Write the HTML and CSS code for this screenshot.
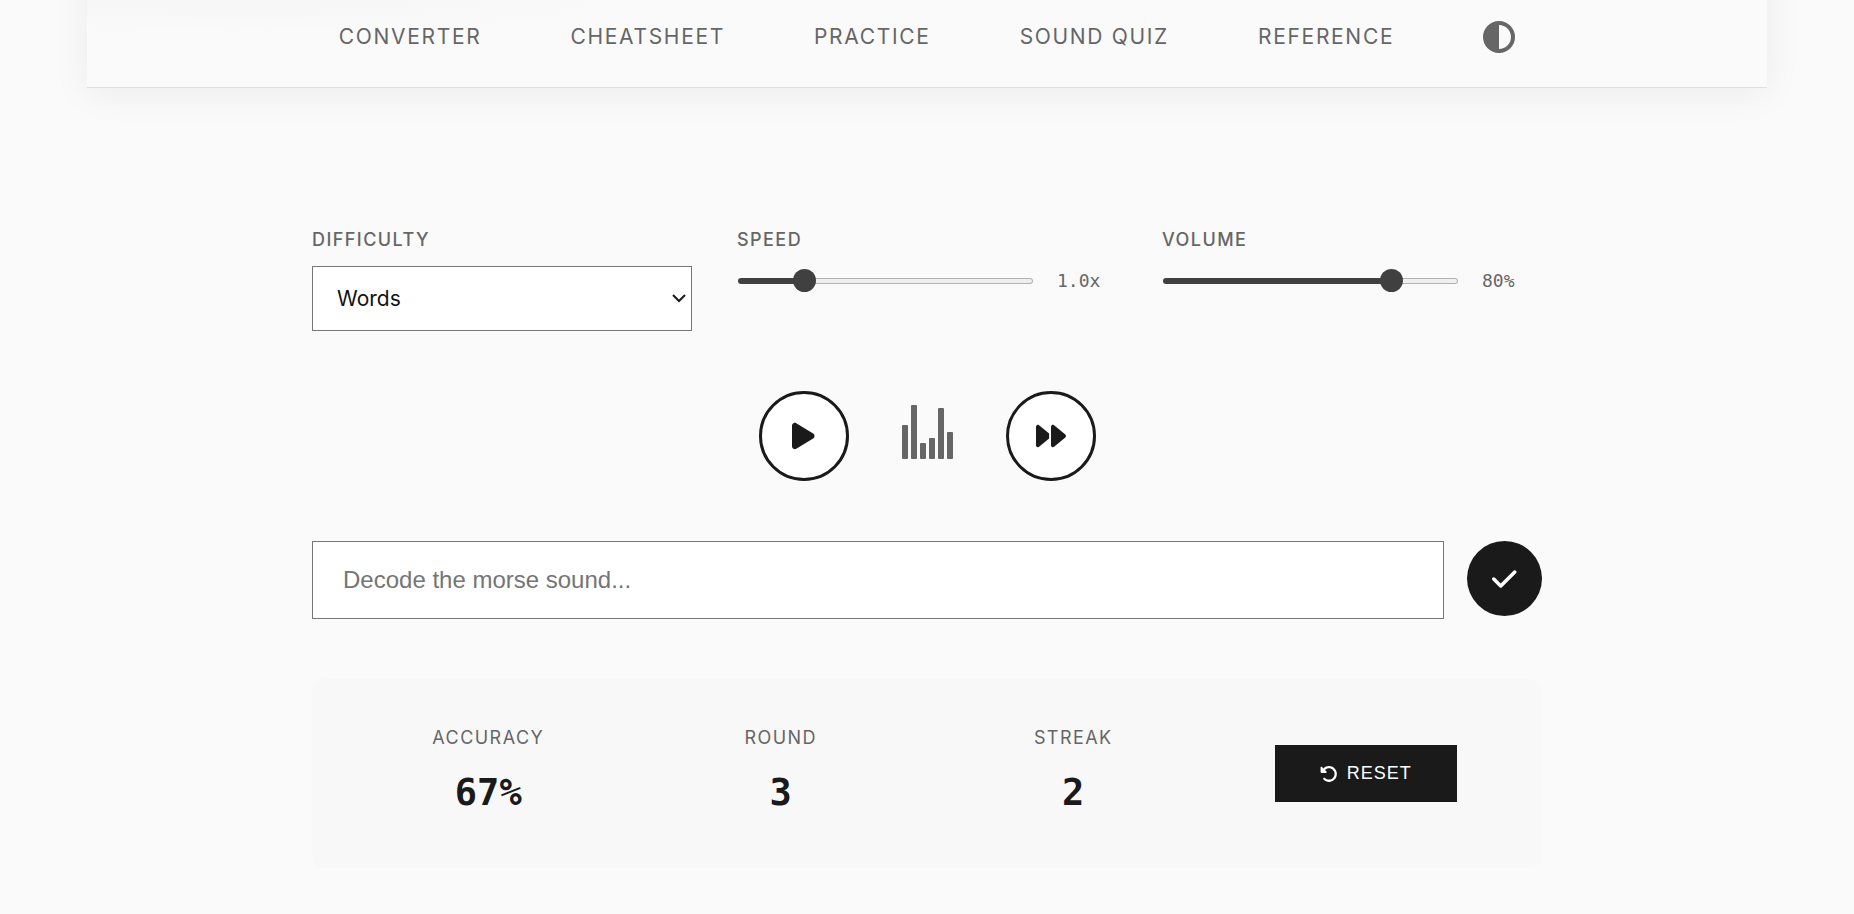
FILE: index.html
```html
<!DOCTYPE html>
<html lang="en">
<head>
<meta charset="utf-8">
<meta name="viewport" content="width=device-width, initial-scale=1">
<title>Sound Quiz</title>
<link rel="stylesheet" href="styles.css">
</head>
<body>
<header class="site-header">
  <nav class="nav">
    <a class="nav-link" href="#converter">Converter</a>
    <a class="nav-link" href="#cheatsheet">Cheatsheet</a>
    <a class="nav-link" href="#practice">Practice</a>
    <a class="nav-link" href="#quiz">Sound Quiz</a>
    <a class="nav-link" href="#reference">Reference</a>
    <button class="theme-toggle" type="button" aria-label="Toggle theme">
      <svg viewBox="0 0 512 512" width="32" height="32" fill="currentColor"><path d="M448 256c0-106-86-192-192-192V448c106 0 192-86 192-192zM0 256a256 256 0 1 1 512 0A256 256 0 1 1 0 256z"/></svg>
    </button>
  </nav>
</header>
<main class="quiz">
  <section class="settings">
    <div class="field">
      <label class="field-label" for="difficulty">Difficulty</label>
      <div class="select-wrap">
        <select class="select" id="difficulty"><option>Words</option></select>
        <svg class="chevron" viewBox="0 0 14 9" width="14" height="9" fill="none" stroke="currentColor" stroke-width="2"><path d="M1 1l6 6 6-6"/></svg>
      </div>
    </div>
    <div class="field">
      <label class="field-label" for="speed">Speed</label>
      <div class="slider-row">
        <input class="slider" id="speed" type="range" min="0.5" max="3" step="0.1" value="1" style="--fill: 20%">
        <output class="slider-value" for="speed">1.0x</output>
      </div>
    </div>
    <div class="field">
      <label class="field-label" for="volume">Volume</label>
      <div class="slider-row">
        <input class="slider" id="volume" type="range" min="0" max="100" value="80" style="--fill: 80%">
        <output class="slider-value" for="volume">80%</output>
      </div>
    </div>
  </section>
  <section class="player">
    <button class="round-btn" type="button" aria-label="Play">
      <svg viewBox="0 0 384 512" height="30" fill="currentColor"><path d="M73 39c-14.8-9.1-33.4-9.4-48.5-.9S0 62.6 0 80V432c0 17.4 9.4 33.4 24.5 41.9s33.7 8.1 48.5-.9L361 297c14.3-8.7 23-24.2 23-41s-8.7-32.2-23-41L73 39z"/></svg>
    </button>
    <div class="bars" aria-hidden="true">
      <span class="bar" style="height: 34px"></span>
      <span class="bar" style="height: 54px"></span>
      <span class="bar" style="height: 16px"></span>
      <span class="bar" style="height: 21px"></span>
      <span class="bar" style="height: 51px"></span>
      <span class="bar" style="height: 27px"></span>
    </div>
    <button class="round-btn" type="button" aria-label="Next">
      <svg viewBox="0 0 512 512" height="30" fill="currentColor"><path d="M52.500 440.600c-9.500 7.900-22.800 9.700-34.100 4.400S0 428.400 0 416V96C0 83.600 7.200 72.300 18.400 67s24.500-3.600 34.100 4.400L224 214.300V256v41.700L52.500 440.600zM256 352V256 128 96c0-12.400 7.200-23.700 18.400-29s24.500-3.600 34.100 4.400l192 160c7.300 6.100 11.500 15.100 11.500 24.600s-4.200 18.500-11.500 24.600l-192 160c-9.500 7.900-22.800 9.700-34.100 4.400s-18.400-16.600-18.400-29V352z"/></svg>
    </button>
  </section>
  <form class="answer">
    <input class="answer-input" type="text" placeholder="Decode the morse sound..." aria-label="Your answer">
    <button class="submit-btn" type="button" aria-label="Check answer">
      <svg viewBox="0 0 448 512" height="28" fill="currentColor"><path d="M438.600 105.400c12.500 12.500 12.500 32.800 0 45.300l-256 256c-12.500 12.500-32.800 12.500-45.300 0l-128-128c-12.500-12.500-12.500-32.800 0-45.300s32.800-12.500 45.300 0L160 338.700 393.400 105.400c12.500-12.500 32.800-12.500 45.300 0z"/></svg>
    </button>
  </form>
  <section class="stats">
    <div class="stat"><span class="stat-label">Accuracy</span><span class="stat-value">67%</span></div>
    <div class="stat"><span class="stat-label">Round</span><span class="stat-value">3</span></div>
    <div class="stat"><span class="stat-label">Streak</span><span class="stat-value">2</span></div>
    <button class="reset-btn" type="button">
      <svg viewBox="0 0 512 512" width="18" height="18" fill="currentColor"><path d="M48.500 224H40c-13.300 0-24-10.700-24-24V72c0-9.700 5.800-18.500 14.800-22.200s19.300-1.700 26.200 5.200L98.600 96.600c87.600-86.500 228.700-86.200 315.800 1c87.500 87.500 87.500 229.300 0 316.800s-229.300 87.500-316.800 0c-12.500-12.500-12.500-32.800 0-45.300s32.800-12.500 45.300 0c62.500 62.500 163.800 62.500 226.300 0s62.500-163.800 0-226.300c-62.200-62.200-162.700-62.500-225.300-1L185 183c6.900 6.900 8.900 17.200 5.200 26.200s-12.500 14.800-22.200 14.800H48.500z"/></svg>
      Reset
    </button>
  </section>
</main>
</body>
</html>
```
FILE: styles.css
```css
:root {
  --ink: #1a1a1a;
  --muted: #666;
  --accent: #404040;
  --page: #fafafa;
}

* { box-sizing: border-box; }

body {
  margin: 0;
  background: var(--page);
  color: var(--ink);
  font-family: Inter, "Liberation Sans", sans-serif;
  overflow-x: hidden;
}

button { cursor: pointer; padding: 0; }

svg { display: block; }

/* Header */
.site-header {
  max-width: 1680px;
  margin: -60px auto 0;
  padding: 80px 24px 33px;
  border-bottom: 1px solid #e0e0e0;
  background:
    radial-gradient(ellipse 400px 48px at 160px 48px, #f5f5f5, transparent),
    var(--page);
  box-shadow: 0 6px 36px rgba(0, 0, 0, 0.06);
}

.nav {
  display: flex;
  justify-content: center;
  align-items: center;
  gap: 89px;
}

.nav-link {
  color: var(--muted);
  font-size: 21px;
  line-height: 34px;
  letter-spacing: 0.08em;
  text-decoration: none;
  text-transform: uppercase;
}

.theme-toggle {
  border: 0;
  background: none;
  color: var(--muted);
}

/* Quiz */
.quiz {
  max-width: 1278px;
  margin: 0 auto;
  padding: 138px 24px 46px;
}

.settings {
  display: grid;
  grid-template-columns: repeat(3, 1fr);
  align-items: start;
  gap: 45px;
}

.field {
  display: flex;
  flex-direction: column;
  gap: 12px;
}

.field-label,
.stat-label {
  color: var(--muted);
  font-size: 18px;
  line-height: 28px;
  letter-spacing: 0.08em;
  text-transform: uppercase;
}

.field-label { font-weight: 500; }

.select-wrap { position: relative; }

.select {
  appearance: none;
  width: 100%;
  height: 65px;
  padding: 0 24px;
  border: 1px solid #767676;
  border-radius: 0;
  background: #fff;
  color: #111;
  font-family: inherit;
  font-size: 21px;
}

.chevron {
  position: absolute;
  top: 28px;
  right: 6px;
  pointer-events: none;
}

.slider-row {
  display: flex;
  align-items: center;
  gap: 23px;
}

.slider {
  appearance: none;
  flex: 1;
  min-width: 0;
  height: 6px;
  margin: 0 1px;
  border: 1px solid transparent;
  border-radius: 3px;
  background:
    linear-gradient(to right, var(--accent) var(--fill), transparent var(--fill)) border-box,
    linear-gradient(#efefef, #efefef) padding-box,
    linear-gradient(#b2b2b2, #b2b2b2) border-box;
}

.slider::-webkit-slider-thumb {
  appearance: none;
  width: 23px;
  height: 23px;
  border-radius: 50%;
  background: var(--accent);
}

.slider-value {
  width: 60px;
  color: var(--muted);
  font-family: "DejaVu Sans Mono", monospace;
  font-size: 18px;
  line-height: 29px;
}

/* Player */
.player {
  display: flex;
  justify-content: center;
  align-items: center;
  gap: 53px;
  margin-top: 60px;
}

.round-btn {
  display: grid;
  place-items: center;
  width: 90px;
  height: 90px;
  border: 3px solid var(--ink);
  border-radius: 50%;
  background: #fff;
  color: var(--ink);
}

.bars {
  display: flex;
  align-items: flex-end;
  gap: 3px;
  height: 46px;
}

.bar {
  width: 6px;
  border-radius: 1px;
  background: var(--muted);
}

/* Answer */
.answer {
  display: flex;
  align-items: flex-start;
  gap: 23px;
  margin-top: 60px;
}

.answer-input {
  flex: 1;
  min-width: 0;
  height: 78px;
  padding: 0 30px;
  border: 1px solid #767676;
  background: #fff;
  color: var(--ink);
  font-family: "Liberation Sans", Arial, sans-serif;
  font-size: 24px;
}

.answer-input::placeholder { color: #757575; }

.submit-btn {
  display: grid;
  place-items: center;
  width: 75px;
  height: 75px;
  border: 0;
  border-radius: 50%;
  background: var(--ink);
  color: #fff;
}

/* Stats */
.stats {
  display: grid;
  grid-template-columns: repeat(4, 1fr);
  align-items: center;
  justify-items: center;
  margin-top: 60px;
  padding: 45px 30px;
  border-radius: 12px;
  background: #f8f8f8;
}

.stat {
  display: flex;
  flex-direction: column;
  align-items: center;
  gap: 11px;
}

.stat-value {
  font-family: "DejaVu Sans Mono", monospace;
  font-size: 37px;
  font-weight: 700;
  line-height: 60px;
}

.reset-btn {
  display: flex;
  align-items: center;
  gap: 9px;
  height: 57px;
  padding: 0 45px;
  border: 0;
  background: var(--ink);
  color: #fff;
  font-family: "Liberation Sans", Arial, sans-serif;
  font-size: 18px;
  letter-spacing: 1px;
  text-transform: uppercase;
}

@media (max-width: 900px) {
  .nav { flex-wrap: wrap; gap: 24px; }
  .settings { grid-template-columns: 1fr; }
  .stats { grid-template-columns: 1fr 1fr; gap: 24px; }
}
```
